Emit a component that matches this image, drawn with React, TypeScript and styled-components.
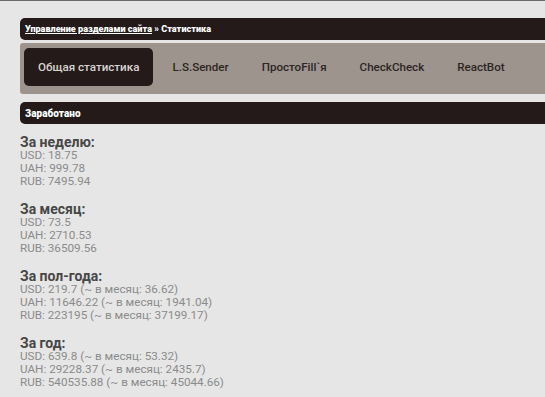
import styled, { createGlobalStyle } from 'styled-components';

interface Period {
    title: string;
    rows: string[];
}

const periods: Period[] = [
    { title: 'За неделю:', rows: ['USD: 18.75', 'UAH: 999.78', 'RUB: 7495.94'] },
    { title: 'За месяц:', rows: ['USD: 73.5', 'UAH: 2710.53', 'RUB: 36509.56'] },
    {
        title: 'За пол-года:',
        rows: [
            'USD: 219.7 (~ в месяц: 36.62)',
            'UAH: 11646.22 (~ в месяц: 1941.04)',
            'RUB: 223195 (~ в месяц: 37199.17)',
        ],
    },
    {
        title: 'За год:',
        rows: [
            'USD: 639.8 (~ в месяц: 53.32)',
            'UAH: 29228.37 (~ в месяц: 2435.7)',
            'RUB: 540535.88 (~ в месяц: 45044.66)',
        ],
    },
];

const tabs = ['Общая статистика', 'L.S.Sender', 'ПростоFill`я', 'CheckCheck', 'ReactBot'];

function App() {
    return (
        <>
            <GlobalStyle />
            <Page>
                <Bar size={9.1}>
                    <a href="#">Управление разделами сайта</a> » Статистика
                </Bar>
                <Tabs>
                    {tabs.map((t, i) => (
                        <Tab key={t} active={i === 0}>
                            {t}
                        </Tab>
                    ))}
                </Tabs>
                <Bar size={10} className="section">
                    Заработано
                </Bar>
                <Stats>
                    {periods.map((p) => (
                        <Block key={p.title}>
                            <Heading>{p.title}</Heading>
                            {p.rows.map((r) => (
                                <Row key={r}>{r}</Row>
                            ))}
                        </Block>
                    ))}
                </Stats>
            </Page>
        </>
    );
}

export default App;

const GlobalStyle = createGlobalStyle`
    html, body {
        margin: 0;
        padding: 0;
        overflow: hidden;
    }

    body {
        background: #e6e6e6;
        border-top: 1px solid #6a6a6a;
        font-family: Roboto, 'Liberation Sans', sans-serif;
    }
`;

const Page = styled.div`
    width: 640px;
    padding: 17px 0 0 20px;
`;

const Bar = styled.div<{ size: number }>`
    height: 22px;
    display: flex;
    align-items: center;
    padding-left: 5px;
    background: #231a19;
    border-radius: 5px 0 0 5px;
    color: #fff;
    font-family: Roboto, 'Liberation Sans', sans-serif;
    font-weight: 900;
    font-size: ${(p) => p.size}px;
    white-space: pre;

    a {
        color: #fff;
        text-decoration: underline;
    }

    &.section {
        margin-top: 8px;
    }
`;

const Tabs = styled.div`
    margin-top: 3px;
    height: 51px;
    box-sizing: border-box;
    padding: 5px 0 0 4px;
    display: flex;
    gap: 5px;
    background: #9d948e;
    border-radius: 3px 0 0 3px;
`;

const Tab = styled.div<{ active: boolean }>`
    height: 38px;
    display: flex;
    align-items: center;
    padding: 0 14px;
    border-radius: 5px;
    font-size: 11.6px;
    font-weight: 500;
    background: ${(p) => (p.active ? '#231a19' : 'transparent')};
    color: ${(p) => (p.active ? '#d9d4d2' : '#2e2624')};
`;

const Stats = styled.div`
    padding-top: 11px;
`;

const Block = styled.div`
    margin-bottom: 14px;
`;

const Heading = styled.div`
    font-size: 14px;
    font-weight: 700;
    line-height: 14px;
    color: #474747;
`;

const Row = styled.div`
    font-size: 11.7px;
    line-height: 13px;
    color: #8b8b8b;
`;
